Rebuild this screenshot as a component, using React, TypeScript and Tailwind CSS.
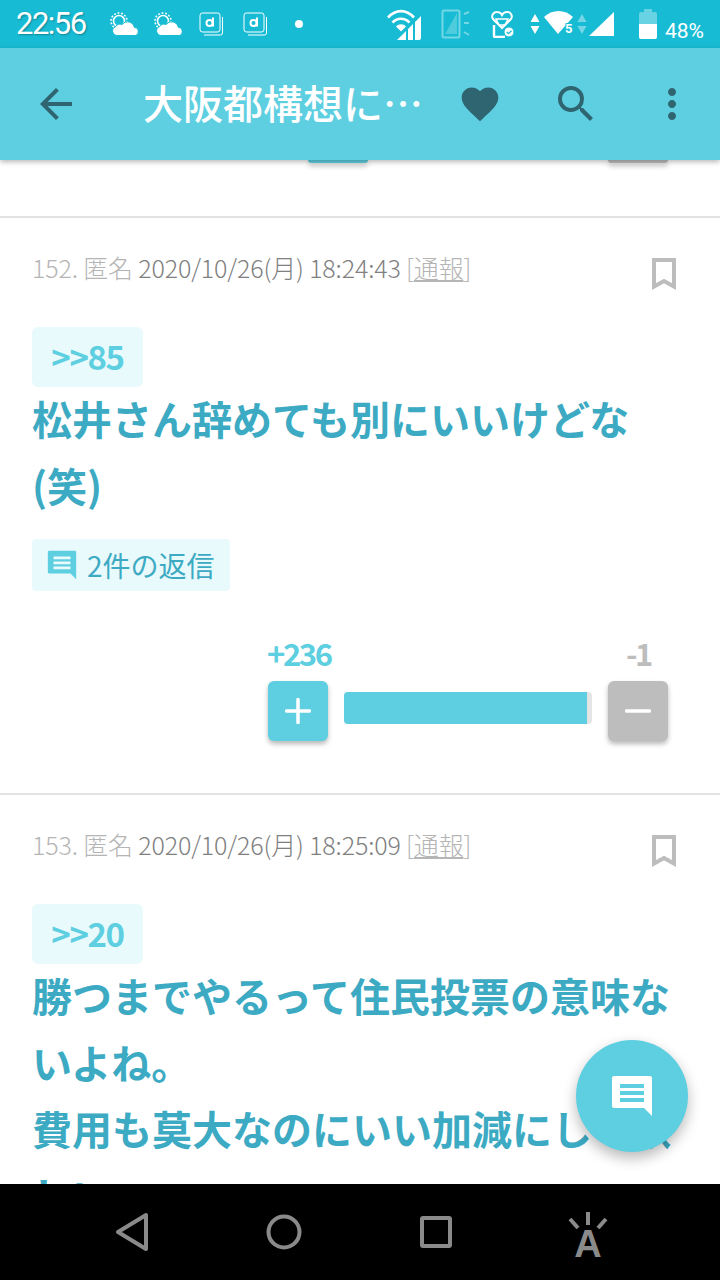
const cjk = "font-['Noto_Sans_CJK_JP','Noto_Sans',sans-serif]";

function Cloud() {
  return (
    <svg width="28" height="24" viewBox="0 0 28 24" fill="none">
      <circle cx="9" cy="9" r="5.5" stroke="white" strokeWidth="1.6" />
      <circle cx="9" cy="9" r="8" stroke="white" strokeWidth="1.6" strokeDasharray="1.8 1.8" />
      <path d="M7 23.500a4.500 4.500 0 0 1-1.500-8.700A5 5 0 0 1 12 12.500a7 7 0 0 1 12.500 3 4 4 0 0 1-.5 8z" fill="white" stroke="#17BCD4" strokeWidth="1" />
    </svg>
  );
}

function DIcon() {
  return (
    <svg width="25" height="24" viewBox="0 0 25 24" fill="none" stroke="white" strokeWidth="1">
      <rect x="1" y="1" width="20" height="19" rx="2.5" />
      <path d="M23.500 5v16a2 2 0 0 1-2 2H5" />
      <path d="M14 5.500v9" strokeWidth="2" />
      <circle cx="10.500" cy="11" r="3" strokeWidth="2" />
    </svg>
  );
}

function Wifi() {
  return (
    <svg width="34" height="32" viewBox="0 0 34 32" fill="none">
      <g stroke="white" strokeWidth="2.6">
        <path d="M1 9.500C9 1 19 1 27 9.500" />
        <path d="M5.500 14.500c5-5 12-5 17 0" />
      </g>
      <path d="M9 18.500c3-3 7-3 10 0l-5 5z" fill="white" />
      <path d="M10 32l9-9v9zM21 21l5-5v16h-5zM28 14l6-6v22a2 2 0 0 1-2 2h-4z" fill="white" />
    </svg>
  );
}

function Rotate() {
  return (
    <svg width="29" height="30" viewBox="0 0 29 30" fill="none" opacity="0.4">
      <rect x="1.500" y="1.500" width="17" height="27" rx="1.500" stroke="white" strokeWidth="2" />
      <path d="M4 25L16 4v21z" fill="white" opacity="0.6" />
      <path d="M23 5l5-2M23 14h5M23 23l5 3" stroke="white" strokeWidth="2" />
    </svg>
  );
}

function Heart() {
  return (
    <svg width="25" height="27" viewBox="0 0 25 27" fill="none" stroke="white">
      <path d="M12 17L3 8a4.500 4.500 0 0 1 4-7c2.500 0 4 1 5 3 1-2 3-3 5-3a4.500 4.500 0 0 1 4 7z" strokeWidth="2" />
      <path d="M6 8h12l-3 6H9z" strokeWidth="1.500" />
      <path d="M4 14v11a1 1 0 0 0 1 1h10" strokeWidth="2.400" />
      <circle cx="19" cy="21" r="5" fill="white" stroke="#17BCD4" />
      <path d="M16.800 21l1.700 1.700 3-3" stroke="#17BCD4" strokeWidth="1.300" />
    </svg>
  );
}

function Updown({ faded }: { faded?: boolean }) {
  return (
    <svg width="10" height="22" viewBox="0 0 10 22" fill="white" opacity={faded ? 0.4 : 1}>
      <path d="M5 1l4.500 8H.5zM5 21L.5 13h9z" />
    </svg>
  );
}

function StatusBar() {
  return (
    <div className="h-12 shrink-0 bg-[#17BCD4] flex items-center text-white">
      <span className="ml-4 w-[94px] text-[31px] leading-none tracking-[-1.500px] font-['Roboto',sans-serif] [text-shadow:1px_1px_2px_rgba(0,0,0,0.3)] -mt-0.5">22:56</span>
      <div className="flex items-center gap-4">
        <Cloud />
        <Cloud />
        <div className="ml-px"><DIcon /></div>
        <div className="ml-[3px]"><DIcon /></div>
        <div className="ml-[11px] size-2 rounded-full bg-white" />
      </div>
      <div className="ml-[84px] flex items-center">
        <Wifi />
        <div className="ml-[20px]"><Rotate /></div>
        <div className="ml-[20px]"><Heart /></div>
        <div className="ml-[15px]"><Updown /></div>
        <svg className="ml-[4px]" width="30" height="26" viewBox="0 0 30 26">
          <path d="M0 6c8-8 21-8 29 0L14 23z" fill="white" />
          <text x="21" y="22" fontSize="13" fontWeight="700" fill="white" stroke="#17BCD4" strokeWidth="2" paintOrder="stroke" fontFamily="Roboto, sans-serif">5</text>
        </svg>
        <div className="ml-[3px]"><Updown faded /></div>
        <svg className="ml-[2px]" width="25" height="24" viewBox="0 0 25 24">
          <path d="M25 0v24H0z" fill="white" />
        </svg>
        <svg className="ml-[25px]" width="18" height="30" viewBox="0 0 18 30">
          <path d="M5 0h8v3h3a2 2 0 0 1 2 2v23a2 2 0 0 1-2 2H2a2 2 0 0 1-2-2V5a2 2 0 0 1 2-2h3z" fill="white" opacity="0.35" />
          <path d="M0 15h18v13a2 2 0 0 1-2 2H2a2 2 0 0 1-2-2z" fill="white" />
        </svg>
        <span className="ml-2 mt-[14px] text-[21px] leading-none font-['Roboto',sans-serif]">48%</span>
      </div>
    </div>
  );
}

function AppBar() {
  return (
    <div className="relative z-10 h-[112px] shrink-0 bg-[#5ECFE0] flex items-center shadow-[0_2px_5px_rgba(0,0,0,0.28)]">
      <svg className="ml-8 shrink-0" width="48" height="48" viewBox="0 0 24 24" fill="#2E6571">
        <path d="M20 11H7.830l5.590-5.590L12 4l-8 8 8 8 1.410-1.410L7.830 13H20z" />
      </svg>
      <h1 className={`ml-[63px] w-[281px] -mt-1 shrink-0 whitespace-nowrap overflow-hidden text-[40px] leading-[56px] font-medium text-white ${cjk}`}>大阪都構想に…</h1>
      <svg className="ml-[34px] shrink-0" width="44" height="44" viewBox="0 0 24 24" fill="#2E6571">
        <path d="M12 21.350l-1.450-1.320C5.400 15.360 2 12.280 2 8.500 2 5.420 4.420 3 7.500 3c1.740 0 3.410.81 4.500 2.090C13.090 3.810 14.760 3 16.500 3 19.580 3 22 5.420 22 8.500c0 3.780-3.400 6.860-8.550 11.540z" />
      </svg>
      <svg className="ml-[50px] shrink-0" width="48" height="48" viewBox="0 0 24 24" fill="#2E6571">
        <path d="M15.500 14h-.79l-.28-.27A6.470 6.470 0 0 0 16 9.500 6.500 6.500 0 1 0 9.500 16c1.610 0 3.090-.59 4.230-1.570l.27.28v.79l5 4.990L20.490 19zm-6 0C7.010 14 5 11.990 5 9.500S7.010 5 9.500 5 14 7.010 14 9.500 11.990 14 9.500 14z" />
      </svg>
      <svg className="ml-12 shrink-0" width="48" height="48" viewBox="0 0 24 24" fill="#2E6571">
        <path d="M12 8c1.100 0 2-.9 2-2s-.9-2-2-2-2 .9-2 2 .9 2 2 2zm0 2c-1.100 0-2 .9-2 2s.9 2 2 2 2-.9 2-2-.9-2-2-2zm0 6c-1.100 0-2 .9-2 2s.9 2 2 2 2-.9 2-2-.9-2-2-2z" />
      </svg>
    </div>
  );
}

function Bubble({ size, fill, line }: { size: number; fill: string; line: string }) {
  return (
    <svg width={size} height={size} viewBox="0 0 24 24">
      <path d="M22 3c0-.6-.4-1-1-1H3c-.6 0-1 .4-1 1v14c0 .6.4 1 1 1h15l4 4z" fill={fill} />
      <path d="M6 6h12v2H6zM6 9.500h12v2H6zM6 13h12v2H6z" fill={line} />
    </svg>
  );
}

function Meta({ no, date }: { no: string; date: string }) {
  return (
    <div className="flex items-start justify-between pl-8 pr-[44px]">
      <p className={`text-[25px] leading-[36px] font-light tracking-[-0.150px] whitespace-nowrap text-[#b5b5b5] ${cjk}`}>
        {no}. 匿名 <span className="text-[#808080]">{date}</span> [<span className="underline">通報</span>]
      </p>
      <svg className="mt-[9px]" width="24" height="32" viewBox="0 0 24 32" fill="none">
        <path d="M2 2h20v26.500L12 23 2 28.500z" stroke="#BDBDBD" strokeWidth="4" strokeMiterlimit="10" />
      </svg>
    </div>
  );
}

function Anchor({ text }: { text: string }) {
  return (
    <div className={`ml-8 w-[111px] h-[60px] rounded-md bg-[#E9FAFC] flex items-center justify-center pb-0.5 text-[33px] leading-none font-bold tracking-[-1.400px] text-[#5ECFE0] ${cjk}`}>
      {text}
    </div>
  );
}

function Body({ lines }: { lines: string[] }) {
  return (
    <div className={`-mt-0.5 pl-8 text-[40px] leading-[66.500px] font-bold text-[#3DAAC3] whitespace-nowrap ${cjk}`}>
      {lines.map((l) => (
        <p key={l}>{l}</p>
      ))}
    </div>
  );
}

function Article() {
  return (
    <section className="h-[577px] pt-[31px] border-t-2 border-[#E2E2E2]">
      <Meta no="152" date="2020/10/26(月) 18:24:43" />
      <div className="mt-[37px]"><Anchor text=">>85" /></div>
      <Body lines={["松井さん辞めても別にいいけどな", "(笑)"]} />
      <div className={`mt-[21px] ml-8 w-[198px] h-[52px] rounded bg-[#E9FAFC] flex items-center gap-2 pl-[13px] text-[28px] leading-none font-normal text-[#3DAAC3] ${cjk}`}>
        <Bubble size={34} fill="#5ECFE0" line="#E9FAFC" />
        <span>2件の返信</span>
      </div>
      <div className="mt-[42px] pl-[268px] pr-[52px]">
        <div className={`flex justify-between text-[31px] leading-[40px] font-bold tracking-[-2.400px] ${cjk}`}>
          <span className="-ml-px text-[#5ECFE0]">+236</span>
          <span className="mr-[17px] text-[#BDBDBD]">-1</span>
        </div>
        <div className="mt-2 flex items-start justify-between">
          <div className="size-[60px] rounded-md bg-[#5ECFE0] flex items-center justify-center shadow-[0_3px_5px_rgba(0,0,0,0.28)]">
            <svg width="26" height="26" viewBox="0 0 26 26"><path d="M13 1.500v23M1.500 13h23" stroke="white" strokeWidth="3.500" strokeLinecap="round" /></svg>
          </div>
          <div className="mt-[11px] w-[248px] h-[32px] rounded bg-[#E4E4E4] overflow-hidden">
            <div className="h-full w-[243px] bg-[#5ECFE0]" />
          </div>
          <div className="size-[60px] rounded-md bg-[#BDBDBD] flex items-center justify-center shadow-[0_3px_5px_rgba(0,0,0,0.28)]">
            <svg width="26" height="26" viewBox="0 0 26 26"><path d="M1.500 13h23" stroke="white" strokeWidth="3.500" strokeLinecap="round" /></svg>
          </div>
        </div>
      </div>
    </section>
  );
}

function Article2() {
  return (
    <section className="pt-[31px] border-t-2 border-[#E2E2E2]">
      <Meta no="153" date="2020/10/26(月) 18:25:09" />
      <div className="mt-[37px]"><Anchor text=">>20" /></div>
      <Body lines={["勝つまでやるって住民投票の意味な", "いよね。", "費用も莫大なのにいい加減にして欲", "しい。"]} />
    </section>
  );
}

function NavBar() {
  return (
    <div className="relative z-10 h-24 shrink-0 bg-black flex items-center">
      <svg className="ml-[112px]" width="40" height="40" viewBox="0 0 40 40" fill="none" stroke="#8a8a8a" strokeWidth="4" strokeLinejoin="round">
        <path d="M34 3v34L6 20z" />
      </svg>
      <svg className="ml-[112px]" width="40" height="40" viewBox="0 0 40 40" fill="none" stroke="#8a8a8a" strokeWidth="4">
        <circle cx="20" cy="20" r="15.500" />
      </svg>
      <svg className="ml-[112px]" width="40" height="40" viewBox="0 0 40 40" fill="none" stroke="#8a8a8a" strokeWidth="4" strokeLinejoin="round">
        <rect x="6" y="6" width="28" height="28" rx="1" />
      </svg>
      <div className="ml-[112px] w-10 h-[46px] mt-[6px] flex flex-col items-center">
        <svg className="shrink-0" width="40" height="18" viewBox="0 0 40 18" fill="none" stroke="#8a8a8a" strokeWidth="4">
          <path d="M20 0v13M2 7l8 9M38 7l-8 9" />
        </svg>
        <span className="text-[#8a8a8a] text-[38px] leading-[28px] font-bold font-['Liberation_Sans',sans-serif]">A</span>
      </div>
    </div>
  );
}

export default function App() {
  return (
    <div className="relative w-[720px] h-[1280px] flex flex-col overflow-hidden bg-white">
      <StatusBar />
      <AppBar />
      <main className="flex-1 min-h-0 overflow-hidden">
        <div className="h-14 pl-[308px] pr-[52px] flex items-start justify-between">
          <div className="w-[60px] h-[3px] rounded-b-md bg-[#5ECFE0] shadow-[0_3px_5px_rgba(0,0,0,0.28)]" />
          <div className="w-[60px] h-[3px] rounded-b-md bg-[#BDBDBD] shadow-[0_3px_5px_rgba(0,0,0,0.28)]" />
        </div>
        <Article />
        <Article2 />
      </main>
      <NavBar />
      <button className="absolute left-[576px] top-[1040px] z-20 size-[112px] rounded-full bg-[#5ECFE0] flex items-center justify-center shadow-[0_6px_14px_rgba(0,0,0,0.28)]">
        <Bubble size={48} fill="white" line="#5ECFE0" />
      </button>
    </div>
  );
}
